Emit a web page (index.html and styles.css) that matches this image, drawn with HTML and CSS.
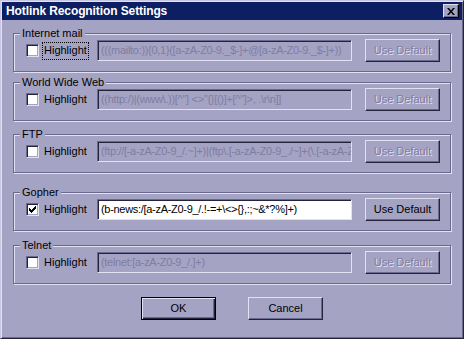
FILE: index.html
```html
<!DOCTYPE html>
<html>
<head>
<meta charset="utf-8">
<link rel="stylesheet" href="styles.css">
</head>
<body>
<div class="window">
  <div class="titlebar">
    <span class="title">Hotlink Recognition Settings</span>
    <span class="close"><svg width="8" height="7" viewBox="0 0 8 7"><path d="M0 0h2l2 2.5L6 0h2L5 3.5 8 7H6L4 4.5 2 7H0l3-3.5z" fill="#000"/></svg></span>
  </div>
  <div class="content">
    <fieldset class="group g1">
      <legend>Internet mail</legend>
      <div class="row">
        <div class="check"><span class="box"></span><span class="lbl focus">Highlight</span></div>
        <div class="field off">(((mailto:)){0,1}([a-zA-Z0-9._$-]+@[a-zA-Z0-9._$-]+))</div>
        <div class="btn off">Use Default</div>
      </div>
    </fieldset>
    <fieldset class="group g2">
      <legend>World Wide Web</legend>
      <div class="row">
        <div class="check"><span class="box"></span><span class="lbl">Highlight</span></div>
        <div class="field off">((http:/)|(www\.))[^"] &lt;&gt;"{}[()]+[^"]&gt;, .\r\n]]</div>
        <div class="btn off">Use Default</div>
      </div>
    </fieldset>
    <fieldset class="group g3">
      <legend>FTP</legend>
      <div class="row">
        <div class="check"><span class="box"></span><span class="lbl">Highlight</span></div>
        <div class="field off">(ftp://[-a-zA-Z0-9_/.~]+)|(ftp\.[-a-zA-Z0-9_./~]+(\.[-a-zA-Z0-9_./~]+)*)</div>
        <div class="btn off">Use Default</div>
      </div>
    </fieldset>
    <fieldset class="group g4">
      <legend>Gopher</legend>
      <div class="row">
        <div class="check"><span class="box"><svg width="7" height="7" viewBox="0 0 7 7"><path d="M0 2h1v1h1v1h1V3h1V2h1V1h1V0h1v3H6v1H5v1H4v1H3v1H2V6H1V5H0z" fill="#000"/></svg></span><span class="lbl">Highlight</span></div>
        <div class="field on">(b-news:/[a-zA-Z0-9_/.!-=+\&lt;&gt;{},:;~&amp;*?%]+)</div>
        <div class="btn">Use Default</div>
      </div>
    </fieldset>
    <fieldset class="group g5">
      <legend>Telnet</legend>
      <div class="row">
        <div class="check"><span class="box"></span><span class="lbl">Highlight</span></div>
        <div class="field off">(telnet:[a-zA-Z0-9_/.]+)</div>
        <div class="btn off">Use Default</div>
      </div>
    </fieldset>
    <div class="actions">
      <div class="btn default">OK</div>
      <div class="btn">Cancel</div>
    </div>
  </div>
</div>
</body>
</html>
```
FILE: styles.css
```css
* { box-sizing: border-box; }
html, body { margin: 0; padding: 0; }
body {
  width: 464px;
  height: 339px;
  overflow: hidden;
  background: #a5a3c4;
  font-family: "Liberation Sans", Arial, sans-serif;
  font-size: 11px;
  color: #000;
}
.window {
  width: 464px;
  height: 339px;
  background: #a5a3c4;
  border: 1px solid;
  border-color: #c8c6e0 #24233a #24233a #c8c6e0;
  box-shadow: inset 1px 1px #e2e1f2, inset -1px -1px #6a688c;
  padding: 1px;
  display: flex;
  flex-direction: column;
}
.titlebar {
  height: 18px;
  background: #0b1f62;
  display: flex;
  align-items: center;
  justify-content: space-between;
  padding: 0 3px 0 3px;
  flex: none;
}
.title {
  color: #fff;
  font-weight: bold;
  font-size: 12px;
  letter-spacing: -0.1px;
  padding-left: 1px;
}
.close {
  width: 16px;
  height: 14px;
  background: #a5a3c4;
  border: 1px solid;
  border-color: #e2e1f2 #000 #000 #e2e1f2;
  box-shadow: inset -1px -1px #6a688c;
  display: flex;
  align-items: center;
  justify-content: center;
  padding-right: 1px;
}
.close svg { display: block; }
.content {
  padding: 7px 11px 0 11px;
  display: flex;
  flex-direction: column;
}
.group {
  margin: 0;
  border: 1px solid #6a688c;
  box-shadow: inset 1px 1px #e2e1f2, 1px 1px #e2e1f2;
  padding: 0 10px 9px 12px;
  min-width: 0;
}
.group legend {
  padding: 0 2px 0 2px;
  margin-left: -6px;
  line-height: 13px;
  background: #a5a3c4;
}
.g2 { margin-top: 4px; }
.g3 { margin-top: 7px; }
.g4 { margin-top: 13px; }
.g5 { margin-top: 8px; }
.row {
  display: flex;
  align-items: center;
  margin-top: -1px;
  height: 23px;
}
.check {
  width: 71px;
  flex: none;
  display: flex;
  align-items: center;
}
.box {
  width: 13px;
  height: 13px;
  background: #fff;
  border: 1px solid;
  border-color: #6a688c #e2e1f2 #e2e1f2 #6a688c;
  box-shadow: inset 1px 1px #24233a, inset -1px -1px #a5a3c4;
  display: flex;
  align-items: center;
  justify-content: center;
  flex: none;
}
.box svg { display: block; }
.lbl {
  margin-left: 3px;
  padding: 1px 1px 2px 1px;
  line-height: 13px;
  border: 1px dotted transparent;
}
.lbl.focus { border-color: #000; }
.field {
  width: 255px;
  height: 21px;
  flex: none;
  border: 1px solid;
  border-color: #6a688c #e2e1f2 #e2e1f2 #6a688c;
  box-shadow: inset 1px 1px #24233a;
  padding: 0 0 0 3px;
  line-height: 19px;
  letter-spacing: -0.3px;
  white-space: nowrap;
  overflow: hidden;
}
.field.off { background: #a5a3c4; color: #7f7da0; }
.field.on { background: #fff; color: #000; }
.btn {
  width: 75px;
  height: 23px;
  flex: none;
  border: 1px solid;
  border-color: #e2e1f2 #24233a #24233a #e2e1f2;
  box-shadow: inset -1px -1px #6a688c;
  display: flex;
  align-items: center;
  justify-content: center;
  margin-left: 13px;
  padding-bottom: 1px;
}
.btn.off { color: #7f7da0; text-shadow: 1px 1px #e2e1f2; }
.actions {
  display: flex;
  justify-content: center;
  gap: 32px;
  margin-top: 13px;
}
.actions .btn { margin-left: 0; }
.btn.default {
  border: 1px solid #000;
  box-shadow: inset 1px 1px #e2e1f2, inset -1px -1px #24233a, inset -2px -2px #6a688c;
}
```
